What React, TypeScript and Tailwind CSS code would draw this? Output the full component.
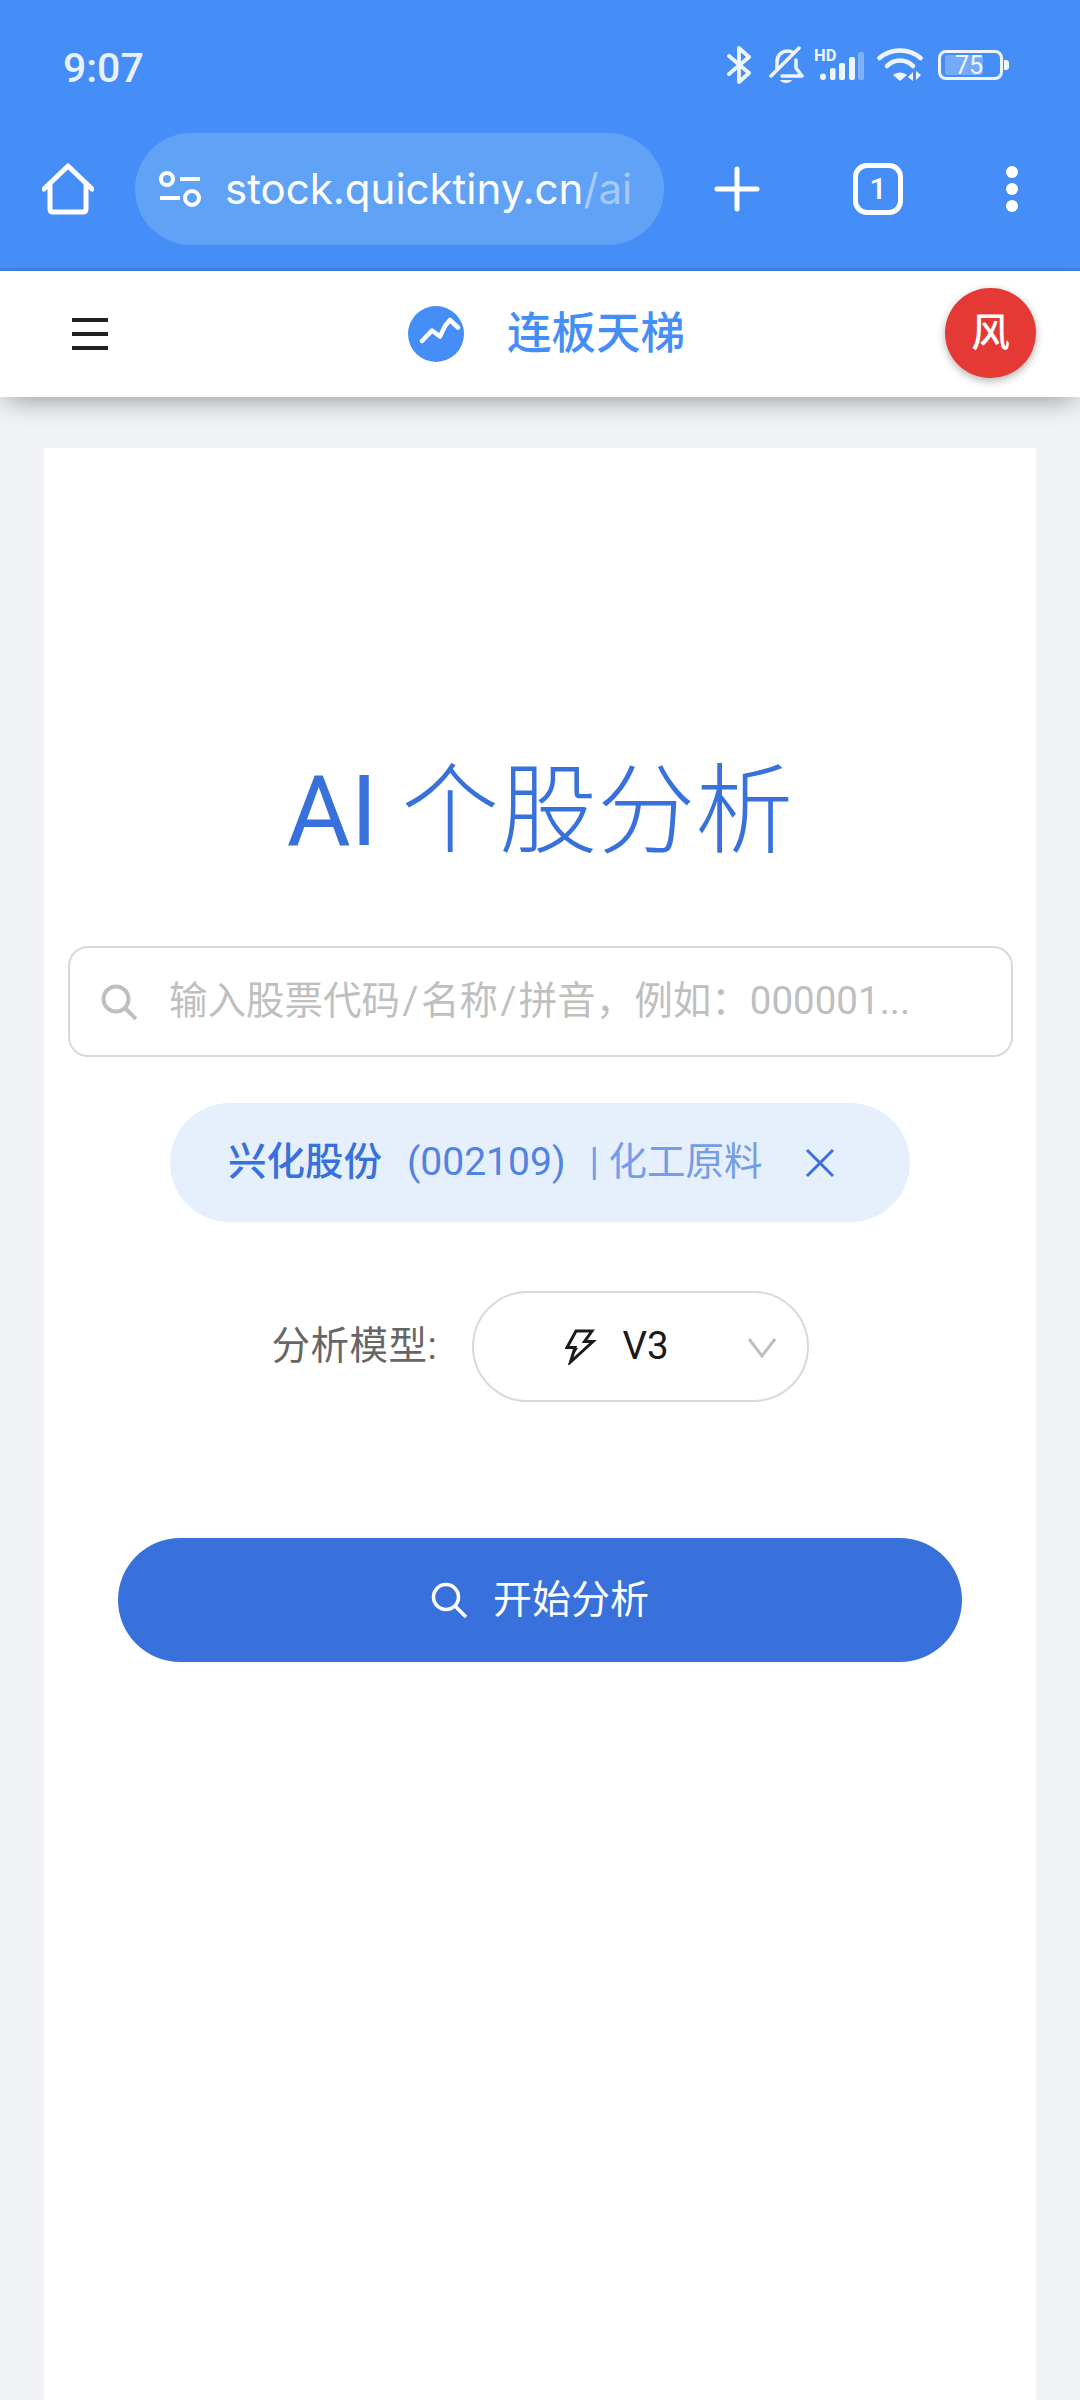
import React from "react";

const SearchIcon = ({ size, color, stroke }: any) => (
  <svg width={size} height={size} viewBox="0 0 36 36" fill="none" stroke={color} strokeWidth={stroke}>
    <circle cx="15" cy="15" r="12.5" />
    <path d="M24 24 L35 35" />
  </svg>
);

const StatusIcons = () => (
  <div className="flex items-center text-white">
    {/* bluetooth */}
    <svg width="24" height="38" viewBox="0 0 24 38" fill="none" stroke="#eef5ff" strokeWidth="3.8" strokeLinejoin="round" strokeLinecap="round">
      <path d="M2 10 L22 27 L12 36 V2 L22 11 L2 28" />
    </svg>
    {/* muted bell */}
    <svg className="ml-[17px]" width="36" height="38" viewBox="0 0 36 38" fill="none" stroke="#eef5ff" strokeWidth="3.5" strokeLinecap="round" strokeLinejoin="round">
      <path d="M3 30 L31 2" />
      <path d="M9 23 V16 C9 9 14 5 20 5 C21 5 23 5 24 6" />
      <path d="M28 14 V22 L34 30 H14" />
      <path d="M12 34 H24 C22 38 14 38 12 34 Z" fill="#eef5ff" stroke="none" />
    </svg>
    {/* HD + signal */}
    <div className="relative ml-[16px] h-[36px] w-[44px]">
      <span className="absolute left-[-6px] top-[3px] text-[16.5px] leading-[12px] font-bold text-[#eef5ff] [font-family:Roboto,sans-serif]">HD</span>
      <svg className="absolute left-0 top-0" width="44" height="36" viewBox="0 0 44 36" fill="#eef5ff">
        <rect x="0" y="26.5" width="6" height="6.5" rx="3" />
        <rect x="10" y="21" width="5.5" height="12" rx="2" />
        <rect x="19" y="16" width="6" height="17" rx="2" />
        <rect x="29" y="10" width="6" height="23" rx="2" />
        <rect x="38" y="5" width="6" height="28" rx="2" opacity="0.35" />
      </svg>
    </div>
    {/* wifi */}
    <svg className="ml-[13px]" width="46" height="34" viewBox="0 0 46 34" fill="none" stroke="#eef5ff" strokeWidth="4.5" strokeLinecap="round">
      <path d="M2.5 10 C14 0 32 0 43.5 10" />
      <path d="M10 18 C17 10.5 29 10.5 36 18" />
      <path d="M23 33 L16 27 C20 23.5 26 23.5 30 27 Z" fill="#eef5ff" stroke="none" />
      <path d="M36 24 V33 L31 29 Z M39 23 V32 L44 27 Z" fill="#eef5ff" stroke="none" />
    </svg>
    {/* battery */}
    <div className="relative ml-[15px] flex h-[30px] w-[65px] items-center justify-end rounded-[8px] border-[3px] border-[#eef5ff] pr-[17px]">
      <div className="absolute left-[4px] top-[2px] h-[20px] w-[38px] rounded-[3px] bg-white/25" />
      <span className="relative text-[25px] leading-none text-[#eef5ff] [font-family:Roboto,sans-serif]">75</span>
    </div>
    <div className="ml-[1px] h-[10px] w-[5px] rounded-r-[3px] bg-[#eef5ff]" />
  </div>
);

export default function App() {
  return (
    <div className="flex h-[2400px] w-[1080px] flex-col overflow-hidden bg-[#f0f2f5] [font-family:Roboto,'Noto_Sans_CJK_SC',sans-serif]">
      {/* browser chrome */}
      <div className="h-[271px] shrink-0 border-b-[3px] border-[#3f80e4] bg-[#468ef7]">
        <div className="flex h-[133px] items-start justify-between pl-[63px] pr-[71px] pt-[46px]">
          <span className="text-[41px] font-medium leading-[44px] text-[#e8f2ff]">9:07</span>
          <StatusIcons />
        </div>
        <div className="flex h-[112px] items-center">
          <svg className="ml-[42px]" width="52" height="52" viewBox="0 0 52 52" fill="none" stroke="#fff" strokeWidth="5" strokeLinejoin="round" strokeLinecap="round">
            <path d="M2 26 L26 3 L50 26" />
            <path d="M8 22 V46 C8 48 9 49 11 49 H41 C43 49 44 48 44 46 V22" />
          </svg>
          <div className="ml-[41px] flex h-[112px] w-[529px] items-center rounded-full bg-[#60a2f6] pl-[24px]">
            <svg width="42" height="36" viewBox="0 0 42 36" fill="none" stroke="#fff" strokeWidth="4">
              <circle cx="8" cy="8" r="6" />
              <path d="M21 8 H41" />
              <path d="M1 27 H21" />
              <circle cx="33" cy="27" r="7" />
            </svg>
            <span className="ml-[24px] text-[42px] leading-none text-white [font-family:Inter,sans-serif]">
              stock.quicktiny.cn<span className="text-white/45">/ai</span>
            </span>
          </div>
          <svg className="ml-[50px]" width="46" height="46" viewBox="0 0 46 46" stroke="#fff" strokeWidth="5" strokeLinecap="round">
            <path d="M3 23 H43 M23 3 V43" />
          </svg>
          <div className="ml-[93px] flex h-[52px] w-[50px] items-center justify-center rounded-[14px] border-[5px] border-white text-[30px] font-medium leading-none text-white">1</div>
          <div className="ml-[103px] flex flex-col gap-[5px]">
            <div className="h-[12px] w-[12px] rounded-full bg-white" />
            <div className="h-[12px] w-[12px] rounded-full bg-white" />
            <div className="h-[12px] w-[12px] rounded-full bg-white" />
          </div>
        </div>
      </div>

      {/* site header */}
      <div className="relative z-10 flex h-[126px] shrink-0 items-center bg-white pl-[72px] pr-[44px] shadow-[0_10px_24px_-6px_rgba(0,0,0,0.35)]">
        <div className="flex w-[36px] flex-col gap-[10.5px]">
          <div className="h-[3.5px] bg-[#222]" />
          <div className="h-[3.5px] bg-[#222]" />
          <div className="h-[3.5px] bg-[#222]" />
        </div>
        <svg className="ml-[300px]" width="56" height="56" viewBox="0 0 56 56" fill="none">
          <circle cx="28" cy="28" r="28" fill="#468ef7" />
          <path d="M14 35 L24 24.5 L32 30.5 L37 20 L42 14 L50 21.5" stroke="#fff" strokeWidth="4.5" strokeLinecap="round" strokeLinejoin="round" />
        </svg>
        <span className="ml-[43px] text-[44.5px] font-medium leading-none text-[#468ef7]">连板天梯</span>
        <div className="mb-[2px] ml-auto flex h-[90px] w-[91px] items-center justify-center rounded-full bg-[#e53935] text-[38.5px] font-medium text-white shadow-[0_3px_8px_rgba(0,0,0,0.3)]">风</div>
      </div>

      {/* page */}
      <div className="flex-1 px-[44px] pt-[51px]">
        <div className="flex h-full flex-col items-center bg-white px-[24px] pt-[304px]">
          <h1 className="text-[98px] font-light leading-[120px] text-[#3871dc]">
            <span className="font-normal">AI</span> 个股分析
          </h1>
          <div className="mt-[74px] flex h-[111px] w-[945px] items-center rounded-[20px] border-2 border-[#d9d9d9] pl-[31.5px]">
            <SearchIcon size={36} color="#bfbfbf" stroke={4} />
            <span className="ml-[32px] text-[38.5px] leading-none text-[#bfbfbf]">
              输入股票代码<span className="px-[2.5px]">/</span>名称<span className="px-[2.5px]">/</span>拼音，例如：000001...
            </span>
          </div>
          <div className="mt-[46px] flex h-[119px] w-[740px] items-center rounded-full bg-[#e6effc] pl-[58px] text-[38.5px] leading-none text-[#3871dc]">
            <span className="font-medium">兴化股份</span>
            <span className="ml-[25px] text-[39px] opacity-85">(002109)</span>
            <span className="ml-[24px] opacity-65">| 化工原料</span>
            <svg className="ml-[43px]" width="30" height="30" viewBox="0 0 30 30" stroke="#3871dc" strokeWidth="3">
              <path d="M2 2 L28 28 M28 2 L2 28" />
            </svg>
          </div>
          <div className="mt-[69px] flex items-center">
            <span className="w-[168px] text-[38.5px] leading-none tracking-[0.5px] text-[#666]">分析模型:</span>
            <div className="relative ml-[32px] flex h-[111px] w-[337px] items-center rounded-full border-2 border-[#d9d9d9] pl-[91px]">
              <svg width="32" height="36" viewBox="0 0 32 36" fill="none" stroke="#1a1a1a" strokeWidth="3" strokeLinejoin="miter">
                <path d="M11 2 H27 L19.5 12.5 H28 L5.5 33 L10 18.5 H2 Z" />
                <path d="M6 30 L10 19 H13 Z" fill="#1a1a1a" stroke="none" />
              </svg>
              <span className="ml-[26px] text-[38.5px] leading-none text-[#1a1a1a]">V3</span>
              <svg className="absolute right-[31px] top-[45px]" width="28" height="20" viewBox="0 0 28 20" fill="none" stroke="#bfbfbf" strokeWidth="3">
                <path d="M1 1 L14 18 L27 1" />
              </svg>
            </div>
          </div>
          <div className="mt-[136px] flex h-[124px] w-[844px] items-center justify-center rounded-full bg-[#3871dc]">
            <SearchIcon size={36} color="#fff" stroke={3.5} />
            <span className="ml-[26px] text-[39px] leading-none text-white">开始分析</span>
          </div>
        </div>
      </div>
    </div>
  );
}
